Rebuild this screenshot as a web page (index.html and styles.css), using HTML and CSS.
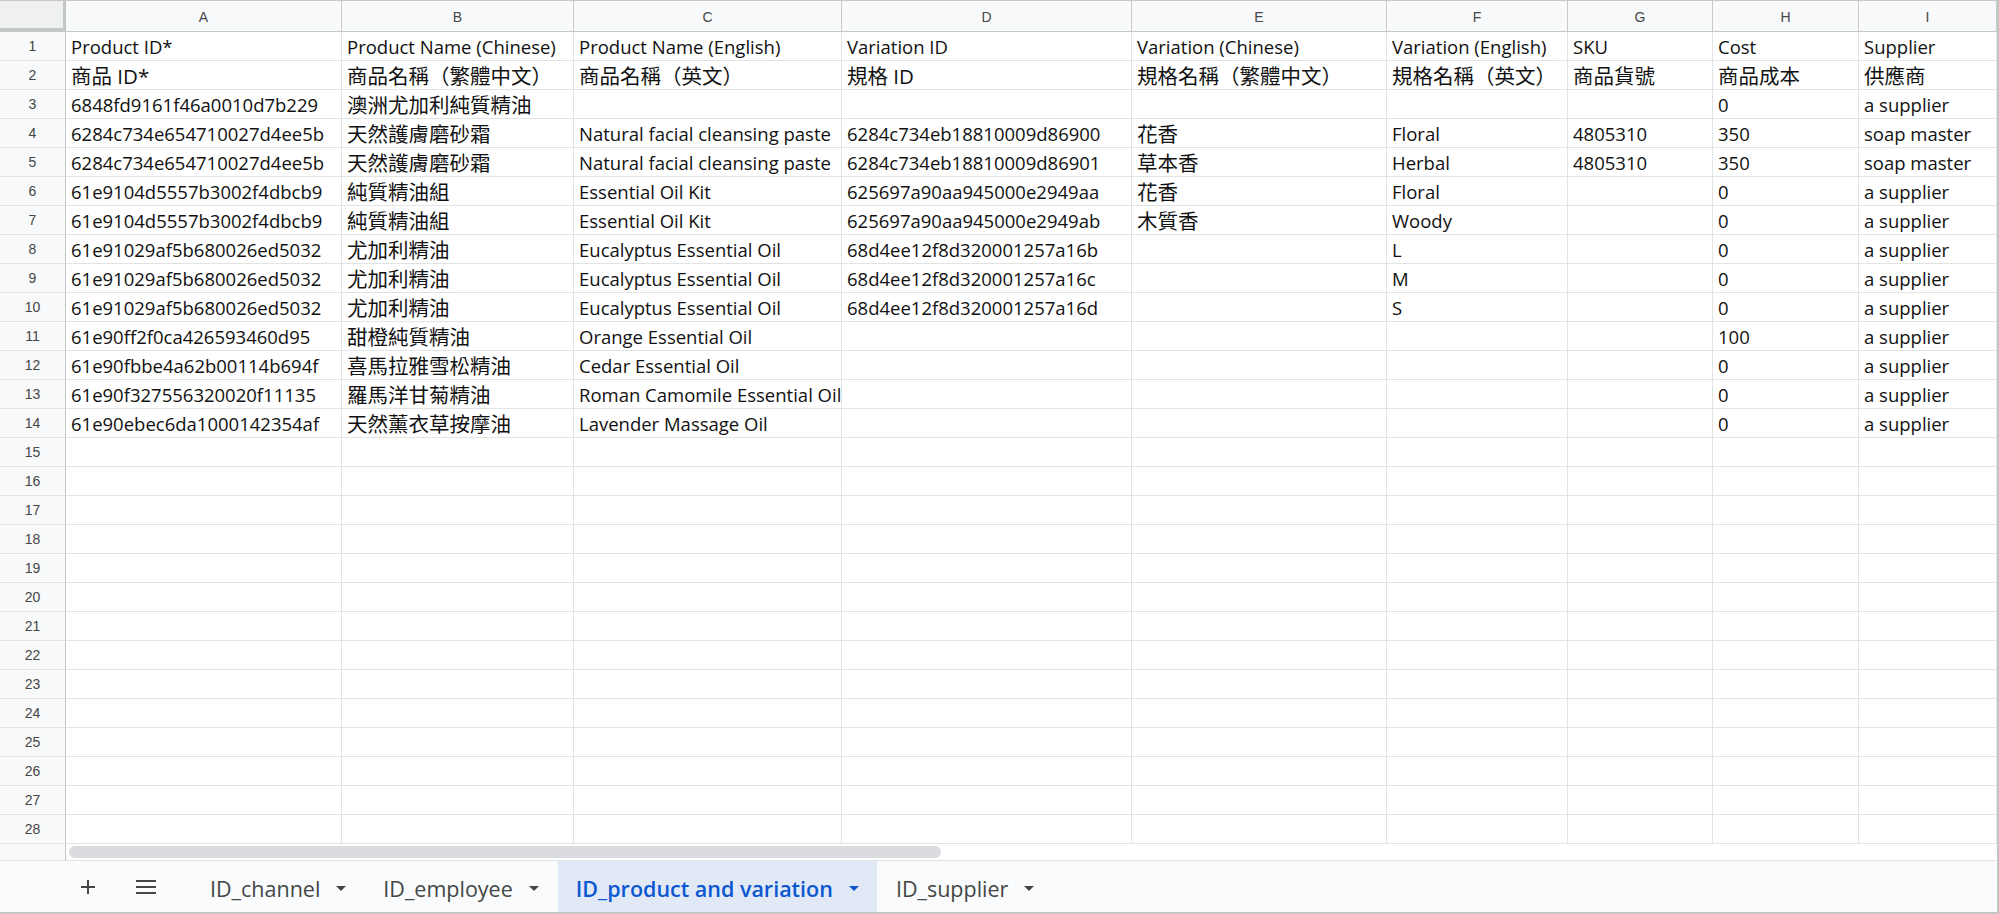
FILE: index.html
```html
<!DOCTYPE html>
<html>
<head>
	<title>ID_product and variation</title>
	<link rel="stylesheet" href="styles.css">
</head>
<body>
	<div id="window">
		<div id="sheet"></div>
		<div id="hscroll">
			<div class="hscroll-corner"></div>
			<div class="hscroll-track"><div class="hscroll-thumb"></div></div>
		</div>
		<div id="tabs">
			<div class="tab-tools">
				<div class="tab-tool">
					<svg width="16" height="16" viewBox="0 0 16 16"><path d="M8 1v14M1 8h14" stroke="#444746" stroke-width="2"/></svg>
				</div>
				<div class="tab-tool">
					<svg width="20" height="14" viewBox="0 0 20 14"><path d="M0 1h20M0 7h20M0 13h20" stroke="#444746" stroke-width="2"/></svg>
				</div>
			</div>
			<div class="tab">ID_channel<span class="tab-arrow"></span></div>
			<div class="tab">ID_employee<span class="tab-arrow"></span></div>
			<div class="tab active">ID_product and variation<span class="tab-arrow"></span></div>
			<div class="tab">ID_supplier<span class="tab-arrow"></span></div>
		</div>
	</div>
	<script>
		let columns = ["A", "B", "C", "D", "E", "F", "G", "H", "I"]

		// rows as they are in the sheet, empty string = empty cell
		let rows = [
			["Product ID*", "Product Name (Chinese)", "Product Name (English)", "Variation ID", "Variation (Chinese)", "Variation (English)", "SKU", "Cost", "Supplier"],
			["商品 ID*", "商品名稱（繁體中文）", "商品名稱（英文）", "規格 ID", "規格名稱（繁體中文）", "規格名稱（英文）", "商品貨號", "商品成本", "供應商"],
			["6848fd9161f46a0010d7b229", "澳洲尤加利純質精油", "", "", "", "", "", "0", "a supplier"],
			["6284c734e654710027d4ee5b", "天然護膚磨砂霜", "Natural facial cleansing paste", "6284c734eb18810009d86900", "花香", "Floral", "4805310", "350", "soap master"],
			["6284c734e654710027d4ee5b", "天然護膚磨砂霜", "Natural facial cleansing paste", "6284c734eb18810009d86901", "草本香", "Herbal", "4805310", "350", "soap master"],
			["61e9104d5557b3002f4dbcb9", "純質精油組", "Essential Oil Kit", "625697a90aa945000e2949aa", "花香", "Floral", "", "0", "a supplier"],
			["61e9104d5557b3002f4dbcb9", "純質精油組", "Essential Oil Kit", "625697a90aa945000e2949ab", "木質香", "Woody", "", "0", "a supplier"],
			["61e91029af5b680026ed5032", "尤加利精油", "Eucalyptus Essential Oil", "68d4ee12f8d320001257a16b", "", "L", "", "0", "a supplier"],
			["61e91029af5b680026ed5032", "尤加利精油", "Eucalyptus Essential Oil", "68d4ee12f8d320001257a16c", "", "M", "", "0", "a supplier"],
			["61e91029af5b680026ed5032", "尤加利精油", "Eucalyptus Essential Oil", "68d4ee12f8d320001257a16d", "", "S", "", "0", "a supplier"],
			["61e90ff2f0ca426593460d95", "甜橙純質精油", "Orange Essential Oil", "", "", "", "", "100", "a supplier"],
			["61e90fbbe4a62b00114b694f", "喜馬拉雅雪松精油", "Cedar Essential Oil", "", "", "", "", "0", "a supplier"],
			["61e90f327556320020f11135", "羅馬洋甘菊精油", "Roman Camomile Essential Oil", "", "", "", "", "0", "a supplier"],
			["61e90ebec6da1000142354af", "天然薰衣草按摩油", "Lavender Massage Oil", "", "", "", "", "0", "a supplier"]
		]
		let rowCount = 28

		let sheet = document.querySelector("#sheet")
		let html = "<div class=\"corner\"></div>"
		for (let col of columns) {
			html += "<div class=\"col-head\">" + col + "</div>"
		}
		for (let r = 0; r < rowCount; r++) {
			html += "<div class=\"row-head\">" + (r + 1) + "</div>"
			let values = rows[r] || []
			for (let c = 0; c < columns.length; c++) {
				let text = values[c] || ""
				let cls = /[\u3000-\u9fff\uff00-\uffef]/.test(text) ? "cell zh" : "cell"
				html += "<div class=\"" + cls + "\">" + text + "</div>"
			}
		}
		sheet.innerHTML = html
	</script>
</body>
</html>
```

FILE: styles.css
```css
html, body {
	margin: 0;
	background: #fff;
}
#window {
	width: 1999px;
	height: 914px;
	box-sizing: border-box;
	border-top: 1px solid #c7c7c7;
	border-right: 2px solid #c4c4c4;
	border-bottom: 2px solid #c4c4c4;
	display: flex;
	flex-direction: column;
	overflow: hidden;
}
#sheet {
	display: grid;
	grid-template-columns: 66px 276px 232px 268px 290px 255px 181px 145px 146px 1fr;
	grid-template-rows: 31px;
	grid-auto-rows: 29px;
	font-family: "Open Sans", "Noto Sans CJK TC", sans-serif;
	font-size: 18.5px;
	color: #111;
}
#sheet > div {
	box-sizing: border-box;
	border-right: 1px solid #e2e3e3;
	border-bottom: 1px solid #e2e3e3;
	overflow: hidden;
	white-space: nowrap;
}
#sheet > .corner {
	background: #eef0f1;
	border-right: 3px solid #c4c7c8;
	border-bottom: 4px solid #c4c7c8;
}
#sheet > .col-head {
	background: #f8f9fa;
	border-right-color: #c9cacb;
	border-bottom-color: #c4c7c8;
	display: flex;
	align-items: center;
	justify-content: center;
	font-family: "Liberation Sans", Arial, sans-serif;
	font-size: 14px;
	color: #444746;
	padding-top: 1px;
}
#sheet > .row-head {
	background: #f8f9fa;
	border-right-color: #c4c7c8;
	display: flex;
	align-items: center;
	justify-content: center;
	font-family: "Liberation Sans", Arial, sans-serif;
	font-size: 14px;
	color: #444746;
}
#sheet > .cell {
	display: flex;
	align-items: flex-end;
	padding: 0 4px 1px 5px;
	line-height: 24px;
}
#sheet > .zh {
	font-size: 20.5px;
}

#hscroll {
	display: grid;
	grid-template-columns: 66px 1fr;
	height: 16px;
	border-bottom: 1px solid #e2e3e3;
}
.hscroll-corner {
	background: #f8f9fa;
	border-right: 1px solid #c4c7c8;
}
.hscroll-track {
	padding: 2px 0 0 3px;
}
.hscroll-thumb {
	width: 872px;
	height: 12px;
	border-radius: 6px;
	background: #dadce0;
}

#tabs {
	flex: 1;
	display: flex;
	align-items: stretch;
	background: #f9fbfd;
	padding-left: 70px;
	font-family: "Open Sans", "Liberation Sans", sans-serif;
	font-size: 21.5px;
	color: #444746;
}
.tab-tools {
	display: flex;
	gap: 22px;
	margin-right: 28px;
}
.tab-tool {
	width: 36px;
	display: flex;
	align-items: center;
	justify-content: center;
}
.tab {
	display: flex;
	align-items: center;
	padding: 3px 18px 0;
	margin-right: 1px;
}
.tab-arrow {
	margin: 0 0 0 16px;
	width: 0;
	height: 0;
	border-left: 5px solid transparent;
	border-right: 5px solid transparent;
	border-top: 5px solid #444746;
}
.tab.active {
	background: #e1e9f7;
	color: #0b57d0;
	font-weight: 600;
}
.tab.active .tab-arrow {
	border-top-color: #0b57d0;
}
```
